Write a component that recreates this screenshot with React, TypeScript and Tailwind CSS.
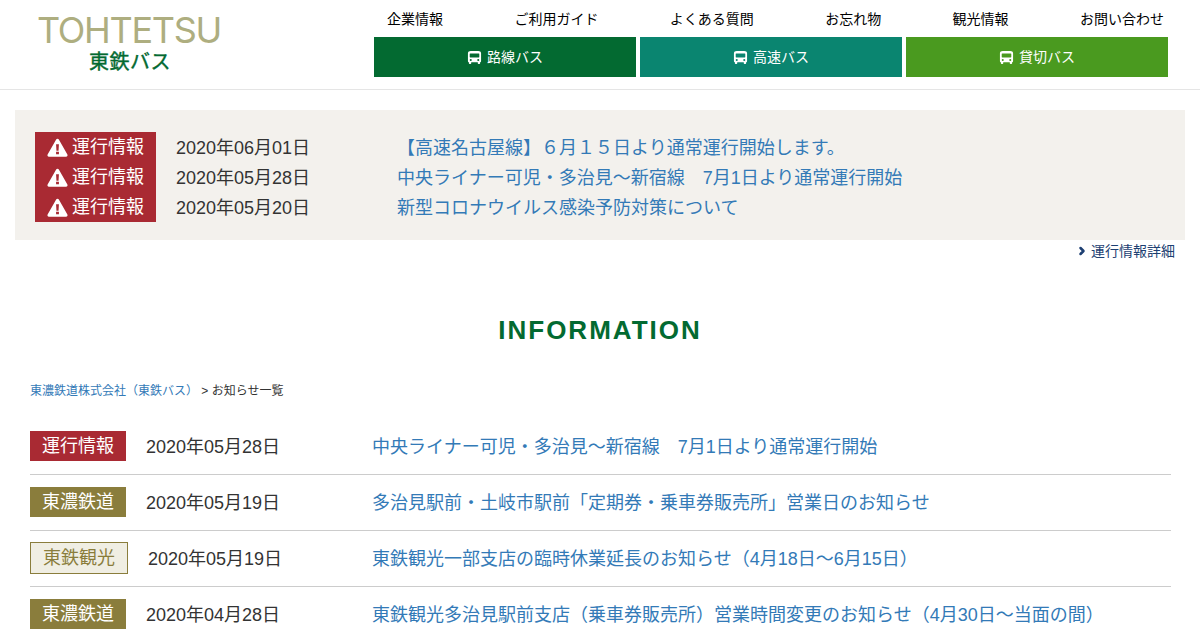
import { ChevronRight } from 'lucide-react';

const FONT = "font-['Liberation_Sans','Noto_Sans_CJK_JP',sans-serif]";

const topLinks = ['企業情報', 'ご利用ガイド', 'よくある質問', 'お忘れ物', '観光情報', 'お問い合わせ'];

const busLinks = [
  { label: '路線バス', color: 'bg-[#036a31]' },
  { label: '高速バス', color: 'bg-[#0a8570]' },
  { label: '貸切バス', color: 'bg-[#4a9a1f]' },
];

const alerts = [
  { date: '2020年06月01日', title: '【高速名古屋線】６月１５日より通常運行開始します。' },
  { date: '2020年05月28日', title: '中央ライナー可児・多治見～新宿線　7月1日より通常運行開始' },
  { date: '2020年05月20日', title: '新型コロナウイルス感染予防対策について' },
];

const news = [
  {
    tag: '運行情報',
    tagClass: 'w-[96px] h-[30px] bg-[#a92a33] text-white',
    date: '2020年05月28日',
    title: '中央ライナー可児・多治見～新宿線　7月1日より通常運行開始',
  },
  {
    tag: '東濃鉄道',
    tagClass: 'w-[96px] h-[30px] bg-[#8a7d3c] text-white',
    date: '2020年05月19日',
    title: '多治見駅前・土岐市駅前「定期券・乗車券販売所」営業日のお知らせ',
  },
  {
    tag: '東鉄観光',
    tagClass: 'w-[98px] h-[32px] bg-[#f0eee3] border border-[#8a7d3c] text-[#8a7d3c]',
    date: '2020年05月19日',
    title: '東鉄観光一部支店の臨時休業延長のお知らせ（4月18日～6月15日）',
  },
  {
    tag: '東濃鉄道',
    tagClass: 'w-[96px] h-[30px] bg-[#8a7d3c] text-white',
    date: '2020年04月28日',
    title: '東鉄観光多治見駅前支店（乗車券販売所）営業時間変更のお知らせ（4月30日～当面の間）',
  },
];

function BusIcon() {
  return (
    <svg viewBox="0 0 16 16" className="h-[15px] w-[15px] fill-white" aria-hidden="true">
      <path d="M4 1h8c1.700 0 3 .9 3 2.400V12c0 .6-.4 1-1 1v1.200c0 .5-.3.8-.8.8h-.9c-.5 0-.8-.3-.8-.8V13H4.500v1.200c0 .5-.3.8-.8.8h-.9c-.5 0-.8-.3-.8-.8V13c-.6 0-1-.4-1-1V3.400C1 1.900 2.300 1 4 1Zm-.6 2.600c-.3 0-.5.2-.5.500v3.300c0 .3.2.5.5.5h9.200c.3 0 .5-.2.500-.5V4.100c0-.3-.2-.5-.5-.5H3.400ZM4 9.600a1.100 1.100 0 1 0 0 2.200 1.100 1.100 0 0 0 0-2.200Zm8 0a1.100 1.100 0 1 0 0 2.200 1.100 1.100 0 0 0 0-2.200Z" fillRule="evenodd" />
    </svg>
  );
}

function WarningIcon() {
  return (
    <svg viewBox="0 0 22 20" className="h-[19px] w-[21px]" aria-hidden="true">
      <path d="M11 .8c.6 0 1.100.3 1.400.8l9 15.800c.6 1.100-.2 2.400-1.400 2.400H2c-1.200 0-2-1.300-1.400-2.400l9-15.800c.3-.5.8-.8 1.400-.8Z" fill="#fff" />
      <path d="M9.500 6.500h3l-.4 6.800H9.900l-.4-6.800ZM9.500 14.600h3v2.600h-3z" fill="#a92a33" />
    </svg>
  );
}

export default function App() {
  return (
    <div className={`${FONT} h-[630px] w-[1200px] overflow-hidden bg-white text-[#333]`}>
      {/* Header */}
      <header className="flex h-[90px] border-b border-[#e5e5e5]">
        <div className="ml-[38px] flex w-[182px] flex-col items-center pt-[9px]">
          <div className="font-['Inter',sans-serif] text-[36px] leading-[42px] tracking-[-1.300px] whitespace-nowrap text-[#aeae80]">
            TOHTETSU
          </div>
          <div className="ml-[2px] text-[20px] leading-[22px] tracking-[0.500px] text-[#036a31] [-webkit-text-stroke:0.4px_#036a31]">東鉄バス</div>
        </div>
        <div className="ml-[154px] w-[794px]">
          <nav className="flex h-[37px] items-center justify-between pr-1 pl-[13px] text-sm text-black">
            {topLinks.map((link) => (
              <a key={link}>{link}</a>
            ))}
          </nav>
          <div className="flex gap-1">
            {busLinks.map((b) => (
              <a key={b.label} className={`flex h-10 w-[262px] items-center justify-center gap-[5px] text-sm text-white ${b.color}`}>
                <BusIcon />
                {b.label}
              </a>
            ))}
          </div>
        </div>
      </header>

      {/* Alerts */}
      <section className="mx-[15px] mt-5 h-[130px] bg-[#f3f1ed] px-5 py-[22px] text-lg">
        {alerts.map((a) => (
          <div key={a.date} className="flex h-[30px] items-center">
            <div className="flex h-[30px] w-[121px] items-center justify-center gap-1 bg-[#a92a33] text-white">
              <WarningIcon />
              運行情報
            </div>
            <div className="ml-5 w-[221px] pt-[2px]">{a.date}</div>
            <a className="pt-[2px] text-[#337ab7]">{a.title}</a>
          </div>
        ))}
      </section>
      <div className="mt-[1px] mr-[25px] flex h-[20px] items-center justify-end text-sm text-[#1d3f72]">
        <ChevronRight size={12} strokeWidth={5} className="mr-[3px] text-[#1d3f72]" />
        運行情報詳細
      </div>

      <h1 className="mt-[50px] text-center text-[26px] leading-[38px] font-bold tracking-[2px] text-[#036a31]">INFORMATION</h1>

      <div className="mx-[30px] mt-[33px] text-xs leading-[18px]">
        <a className="text-[#337ab7]">東濃鉄道株式会社（東鉄バス）</a> &gt; お知らせ一覧
      </div>

      {/* News list */}
      <ul className="mt-[19px] mr-[29px] ml-[30px] text-lg">
        {news.map((n) => (
          <li key={n.date + n.tag} className="flex h-[56px] items-center border-b border-[#ccc] pb-px">
            <span className={`flex items-center justify-center ${n.tagClass}`}>{n.tag}</span>
            <span className={`ml-5 pt-px ${n.tag === '東鉄観光' ? 'w-[224px]' : 'w-[226px]'}`}>{n.date}</span>
            <a className="pt-px text-[#337ab7]">{n.title}</a>
          </li>
        ))}
      </ul>
    </div>
  );
}
